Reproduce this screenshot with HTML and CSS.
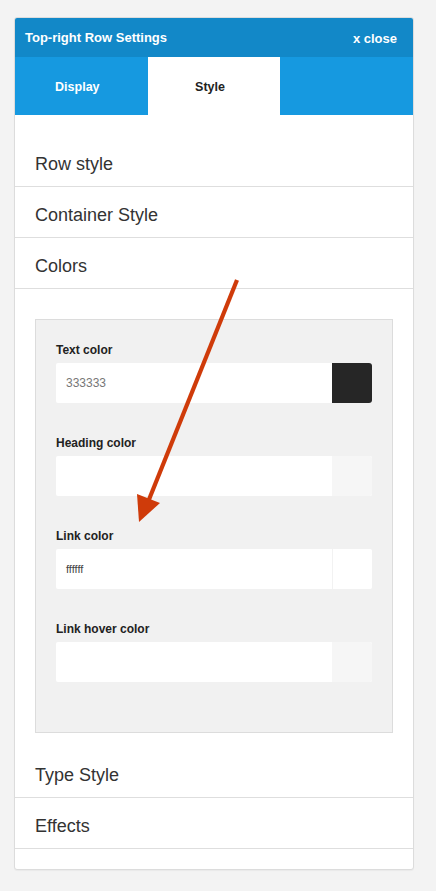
FILE: index.html
```html
<!DOCTYPE html>
<html>
<head>
<meta charset="utf-8">
<link rel="stylesheet" href="styles.css">
</head>
<body>
<div class="panel">
  <div class="header">
    <span class="title">Top-right Row Settings</span>
    <span class="close">x close</span>
  </div>
  <div class="tabs">
    <div class="tab">Display</div>
    <div class="tab active">Style</div>
    <div class="tab"></div>
  </div>
  <div class="sections">
    <div class="section first">Row style</div>
    <div class="section">Container Style</div>
    <div class="section">Colors</div>
    <div class="colors-wrap">
      <div class="colors">
        <div class="field">
          <div class="label">Text color</div>
          <div class="input"><span class="value">333333</span><span class="swatch dark"></span></div>
        </div>
        <div class="field">
          <div class="label">Heading color</div>
          <div class="input"><span class="value"></span><span class="swatch light"></span></div>
        </div>
        <div class="field">
          <div class="label">Link color</div>
          <div class="input"><span class="value dark-text">ffffff</span><span class="swatch white"></span></div>
        </div>
        <div class="field">
          <div class="label">Link hover color</div>
          <div class="input"><span class="value"></span><span class="swatch light"></span></div>
        </div>
      </div>
    </div>
    <div class="section">Type Style</div>
    <div class="section">Effects</div>
    <div class="footer-space"></div>
  </div>
</div>
<svg class="arrow" width="436" height="891" viewBox="0 0 436 891">
  <line x1="237" y1="280" x2="148" y2="502" stroke="#cf3b0a" stroke-width="4.2"/>
  <polygon points="137,494 160,503 139,522" fill="#cf3b0a"/>
</svg>
</body>
</html>
```
FILE: styles.css
```css
html, body {
  margin: 0;
  padding: 0;
  background: #f3f3f3;
  font-family: "Liberation Sans", Arial, sans-serif;
}
body {
  padding: 17px 22px 22px 14px;
  height: 891px;
  box-sizing: border-box;
}
.panel {
  width: 398px;
  background: #fff;
  border: 1px solid #dcdcdc;
  border-radius: 3px;
  overflow: hidden;
  box-shadow: 0 1px 1px rgba(0,0,0,0.04);
}
.header {
  height: 39px;
  background: #1288c8;
  color: #fff;
  display: flex;
  align-items: center;
  justify-content: space-between;
  padding: 0 16px 0 10px;
  font-weight: bold;
  font-size: 13px;
}
.header .title {
  padding-bottom: 1px;
}
.header .close {
  font-size: 13px;
  padding-top: 2px;
}
.tabs {
  display: flex;
  height: 58px;
  background: #1699e0;
}
.tab {
  flex: 1;
  display: flex;
  align-items: center;
  justify-content: center;
  color: #fff;
  font-weight: bold;
  font-size: 12.5px;
  padding-top: 1px;
  padding-right: 8px;
}
.tab.active {
  background: #fff;
  color: #222;
}
.section {
  height: 50px;
  border-bottom: 1px solid #dedede;
  display: flex;
  align-items: center;
  padding-left: 20px;
  padding-top: 7px;
  box-sizing: border-box;
  height: 51px;
  font-size: 18px;
  color: #333;
}
.section.first {
  margin-top: 21px;
}
.colors-wrap {
  padding: 30px 20px 14px 20px;
}
.colors {
  background: #f1f1f1;
  border: 1px solid #dcdcdc;
  padding: 21px 20px 0 20px;
  height: 391px;
}
.field {
  height: 93px;
}
.label {
  font-size: 12px;
  font-weight: bold;
  color: #222;
  line-height: 18px;
}
.input {
  margin-top: 4px;
  height: 40px;
  display: flex;
  background: #fff;
  border-radius: 2px;
}
.value {
  flex: 1;
  padding-left: 10px;
  display: flex;
  align-items: center;
  font-size: 12px;
  color: #777;
}
.value.dark-text {
  color: #444;
  font-size: 11px;
}
.swatch {
  width: 40px;
  height: 40px;
  border-radius: 0 3px 3px 0;
}
.swatch.dark { background: #262626; }
.swatch.light { background: #f6f6f6; }
.swatch.white { background: #fff; border-left: 1px solid #f2f2f2; width: 39px; }
.footer-space {
  height: 20px;
}
.arrow {
  position: absolute;
  left: 0;
  top: 0;
  pointer-events: none;
}
```
